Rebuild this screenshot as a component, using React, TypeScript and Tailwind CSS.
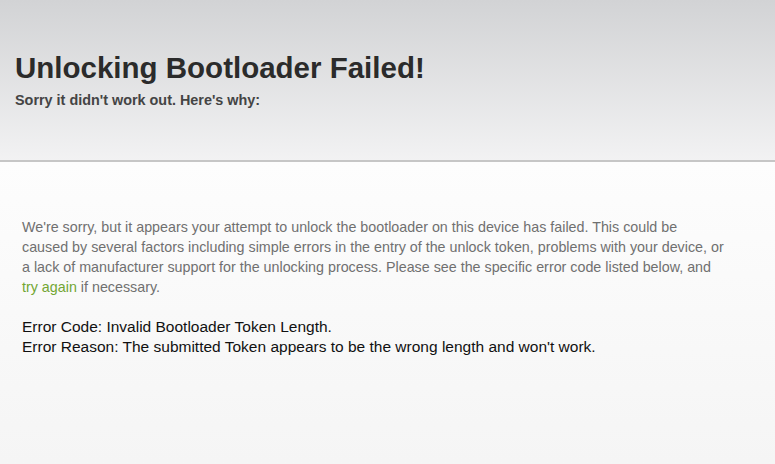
import React from 'react';

export default function App() {
  return (
    <div className="min-h-[464px] w-full flex flex-col font-['Liberation_Sans',Arial,sans-serif]">
      <header className="h-[162px] bg-gradient-to-b from-[#d2d3d5] to-[#f2f2f3] px-[15px] pt-[50px] border-b-2 border-[#c6c6c6]">
        <h1 className="text-[29.5px] leading-[36px] font-bold text-[#2b2b2b]">
          Unlocking Bootloader Failed!
        </h1>
        <p className="text-[14.4px] leading-[16px] font-bold text-[#444] mt-[6px]">
          Sorry it didn't work out. Here's why:
        </p>
      </header>

      <main className="flex-1 bg-gradient-to-b from-[#fdfdfd] to-[#f5f5f5] px-[22px] pt-[55px]">
        <p className="text-[14.3px] leading-[20px] text-[#707070] whitespace-nowrap">
          We're sorry, but it appears your attempt to unlock the bootloader on this device has failed. This could be
          <br />
          caused by several factors including simple errors in the entry of the unlock token, problems with your device, or
          <br />
          a lack of manufacturer support for the unlocking process. Please see the specific error code listed below, and
          <br />
          <a href="#" className="text-[#72a633]">try again</a> if necessary.
        </p>
        <div className="mt-[20px] text-[15.5px] leading-[20px] text-[#111]">
          <p>Error Code: Invalid Bootloader Token Length.</p>
          <p>Error Reason: The submitted Token appears to be the wrong length and won't work.</p>
        </div>
      </main>
    </div>
  );
}
